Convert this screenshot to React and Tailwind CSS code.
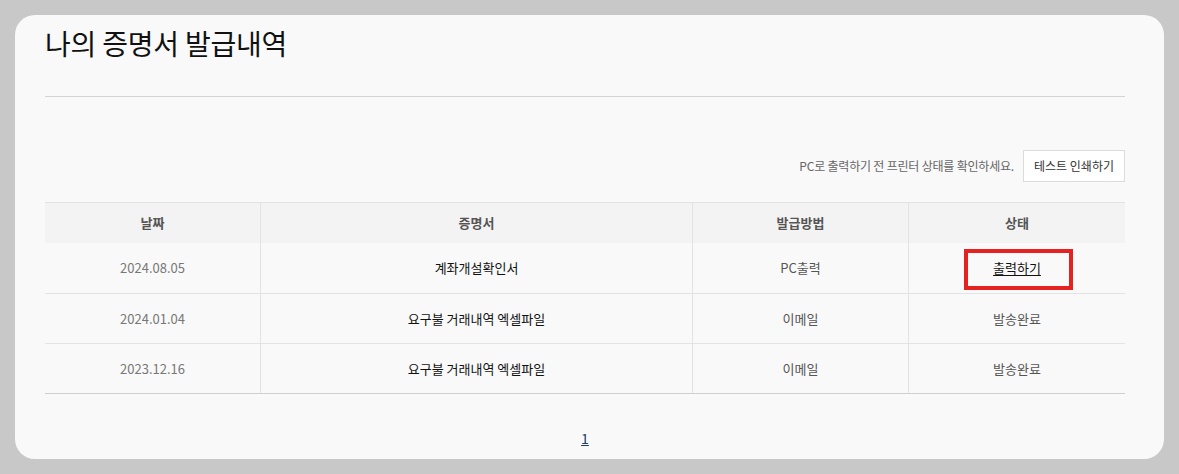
import React from "react";

const rows = [
  { date: "2024.08.05", name: "계좌개설확인서", method: "PC출력", status: "출력하기", link: true },
  { date: "2024.01.04", name: "요구불 거래내역 엑셀파일", method: "이메일", status: "발송완료" },
  { date: "2023.12.16", name: "요구불 거래내역 엑셀파일", method: "이메일", status: "발송완료" },
];

export default function App() {
  return (
    <div
      className="w-[1179px] h-[474px] bg-[#c8c8c8] p-[15px] overflow-hidden"
      style={{ fontFamily: '"Noto Sans CJK KR", "Noto Sans", sans-serif' }}
    >
      <div className="w-[1149px] h-[444px] bg-[#f9f9f9] rounded-[20px] pl-[30px] pr-[39px] pt-[8px]">
        <h1 className="text-[28px] leading-[40px] text-[#111] font-normal tracking-[-0.2px]">나의 증명서 발급내역</h1>
        <div className="mt-[33px] h-px bg-[#d4d4d4]" />
        <div className="mt-[53px] flex items-center justify-end">
          <span className="text-[12px] text-[#666] mr-[9px] tracking-[-0.2px]">PC로 출력하기 전 프린터 상태를 확인하세요.</span>
          <button className="w-[102px] h-[32px] bg-white border border-[#dcdcdc] text-[12px] font-normal text-[#333]">테스트 인쇄하기</button>
        </div>
        <div className="mt-[20px] border-t border-[#e3e3e3] border-b border-b-[#cfcfcf]">
          <div className="grid grid-cols-[216px_432px_216px_216px] h-[40px] bg-[#f3f3f3] text-[13px] font-bold text-[#555]">
            <div className="flex items-center justify-center border-r border-[#e3e3e3]">날짜</div>
            <div className="flex items-center justify-center border-r border-[#e3e3e3]">증명서</div>
            <div className="flex items-center justify-center border-r border-[#e3e3e3]">발급방법</div>
            <div className="flex items-center justify-center">상태</div>
          </div>
          {rows.map((r, i) => (
            <div
              key={i}
              className={`grid grid-cols-[216px_432px_216px_216px] h-[50px] text-[13px] ${i > 0 ? "border-t border-[#e3e3e3]" : ""}`}
            >
              <div className="flex items-center justify-center border-r border-[#e3e3e3] text-[#777]">{r.date}</div>
              <div className="flex items-center justify-center border-r border-[#e3e3e3] text-[#111]">{r.name}</div>
              <div className="flex items-center justify-center border-r border-[#e3e3e3] text-[#555]">{r.method}</div>
              <div className="flex items-center justify-center text-[#555] relative">
                {r.link ? (
                  <>
                    <a className="underline text-[#111] underline-offset-2">{r.status}</a>
                    <div className="absolute left-[55px] top-[6px] w-[109px] h-[41px] border-[4px] border-[#e52222]" />
                  </>
                ) : (
                  r.status
                )}
              </div>
            </div>
          ))}
        </div>
        <div className="mt-[34px] flex justify-center">
          <a className="text-[14px] text-[#1a3d6d] underline">1</a>
        </div>
      </div>
    </div>
  );
}
